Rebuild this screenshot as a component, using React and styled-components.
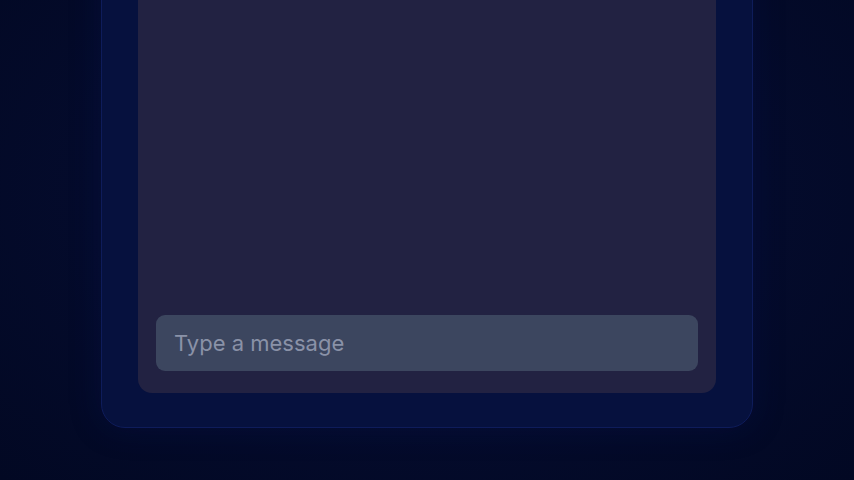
import React from "react";
import styled, { createGlobalStyle } from "styled-components";

const Global = createGlobalStyle`
  html, body { margin: 0; padding: 0; height: 100%; }
  body {
    background: radial-gradient(ellipse at 50% 40%, #06103a 0%, #040b2c 55%, #020823 100%);
    font-family: Inter, "Noto Sans", sans-serif;
    overflow: hidden;
  }
  #root { height: 100%; }
`;

const Page = styled.div`
  height: 480px;
  display: flex;
  flex-direction: column;
  justify-content: flex-end;
  align-items: flex-start;
  overflow: hidden;
  padding: 0 0 52px 101px;
  box-sizing: border-box;
`;

const Card = styled.div`
  width: 652px;
  height: 700px;
  flex-shrink: 0;
  box-sizing: border-box;
  background: #06113e;
  border: 1px solid #0e1c5a;
  border-radius: 24px;
  padding: 0 36px 34px 36px;
  display: flex;
  flex-direction: column;
  justify-content: flex-end;
  box-shadow: 0 0 30px rgba(10, 20, 80, 0.35);
`;

const Panel = styled.div`
  flex: 1;
  background: #222242;
  border-radius: 0 0 14px 14px;
  padding: 0 18px 22px 18px;
  display: flex;
  flex-direction: column;
  justify-content: flex-end;
`;

const Input = styled.input`
  height: 56px;
  box-sizing: border-box;
  border: none;
  outline: none;
  border-radius: 9px;
  background: #3c465f;
  padding: 0 18px;
  font-family: Inter, "Noto Sans", sans-serif;
  font-size: 22px;
  color: #e0e4ee;
  &::placeholder { color: #8a92a8; }
`;

export default function App() {
  return (
    <>
      <Global />
      <Page>
        <Card>
          <Panel>
            <Input placeholder="Type a message" />
          </Panel>
        </Card>
      </Page>
    </>
  );
}
